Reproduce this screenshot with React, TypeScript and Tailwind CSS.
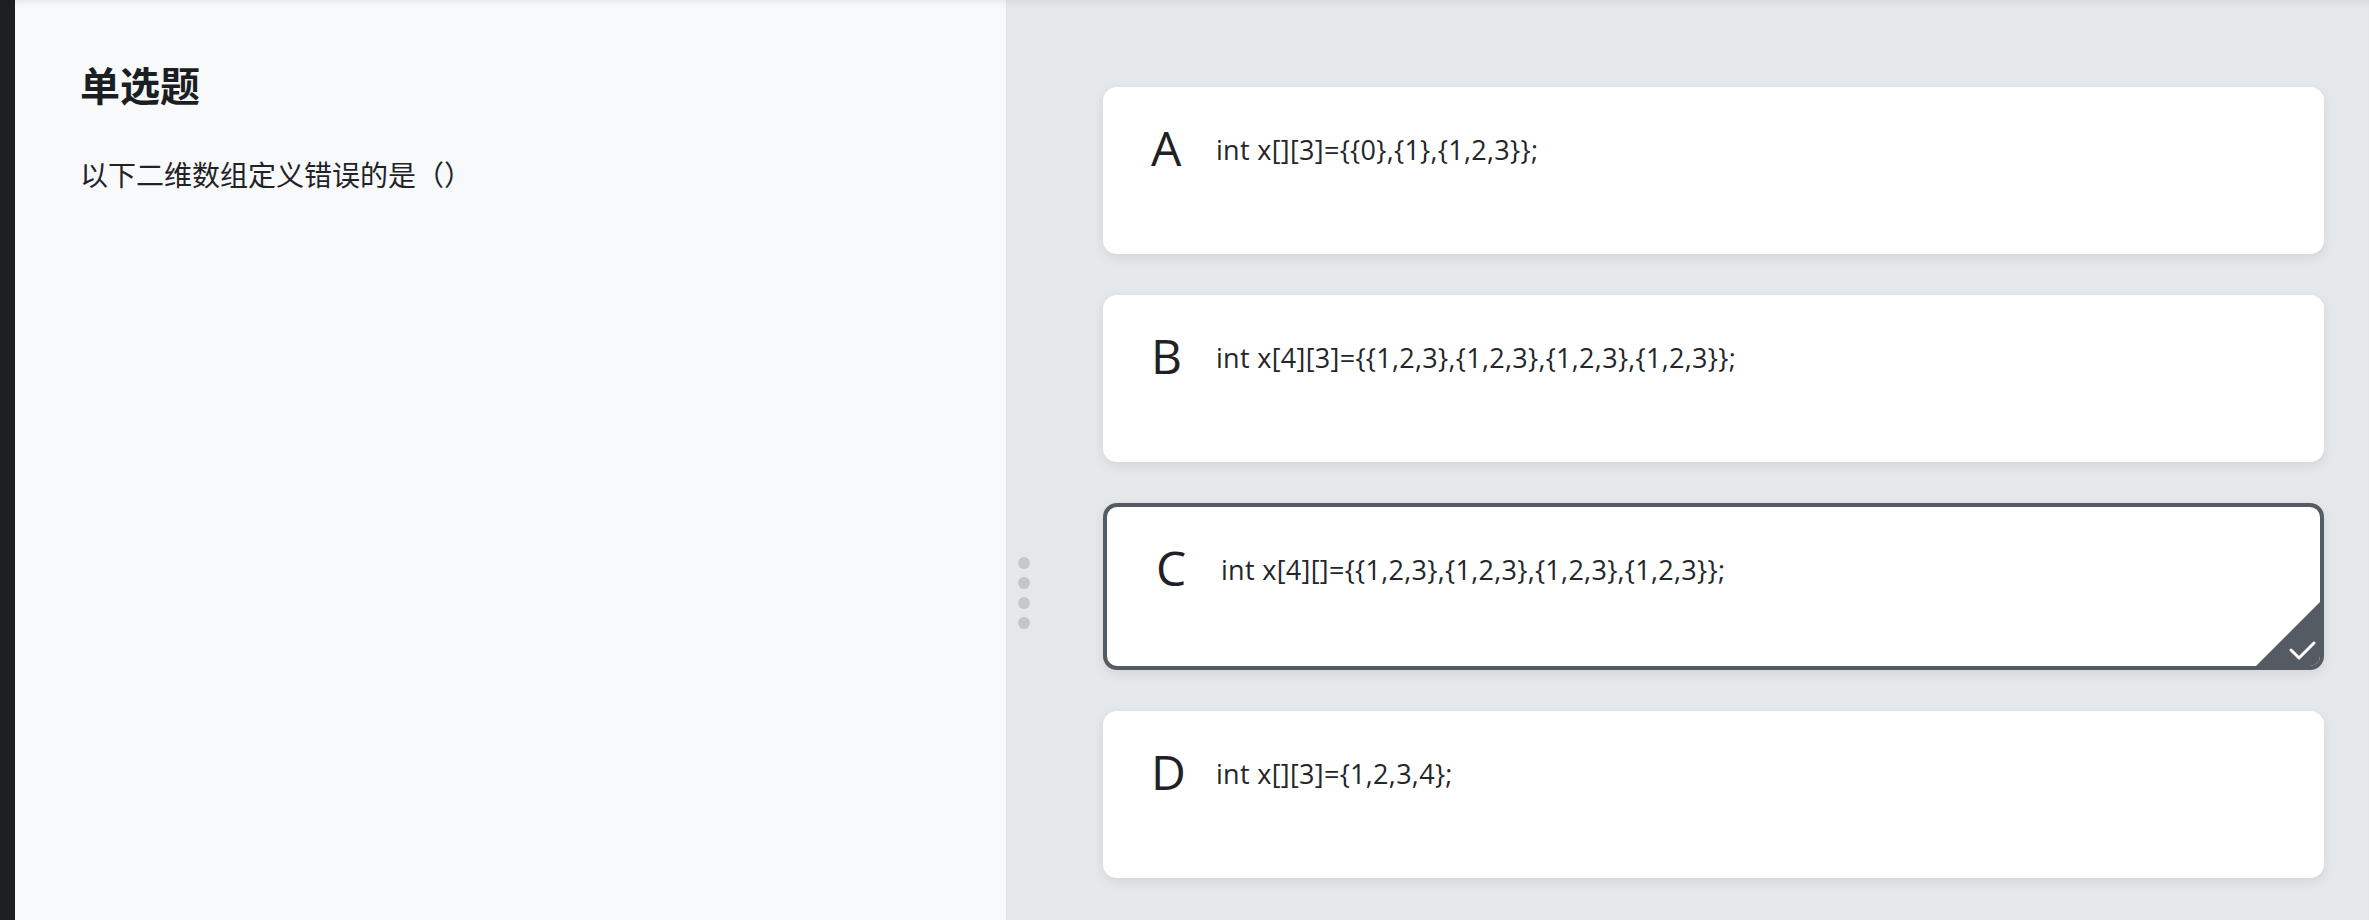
const options = [
  { key: "A", text: "int x[][3]={{0},{1},{1,2,3}};" },
  { key: "B", text: "int x[4][3]={{1,2,3},{1,2,3},{1,2,3},{1,2,3}};" },
  { key: "C", text: "int x[4][]={{1,2,3},{1,2,3},{1,2,3},{1,2,3}};" },
  { key: "D", text: "int x[][3]={1,2,3,4};" },
];

const selected = "C";

const OptionCard = ({ k, text, active }: { k: string; text: string; active: boolean }) => {
  return (
    <div
      className={
        active
          ? "relative box-border h-[167px] overflow-hidden rounded-[14px] border-4 border-[#545b63] bg-white pl-[49px] pt-[37px] shadow-[0_4px_12px_rgba(0,0,0,0.08)]"
          : "relative box-border h-[167px] overflow-hidden rounded-[14px] bg-white pl-[48px] pt-[37px] shadow-[0_4px_12px_rgba(0,0,0,0.08)]"
      }
    >
      <div className="flex items-start">
        <span className="w-[65px] shrink-0 text-[48px] leading-[48px] text-[#1e2125]">{k}</span>
        <span className="mt-[12px] text-[27px] leading-[27px] tracking-[0.3px] text-[#23272b]">{text}</span>
      </div>
      {active && (
        <svg className="absolute bottom-0 right-0" width="64" height="64" viewBox="0 0 64 64">
          <polygon points="64,0 64,64 0,64" fill="#545b63" />
          <path d="M35 48 L43 56 L58 41" fill="none" stroke="white" strokeWidth="3" strokeLinecap="round" strokeLinejoin="round" />
        </svg>
      )}
    </div>
  );
};

export default function App() {
  return (
    <div
      className="flex h-[920px] w-full overflow-hidden"
      style={{ fontFamily: '"Open Sans", "Noto Sans CJK SC", sans-serif' }}
    >
      <div className="w-[15px] shrink-0 bg-[#1b1f22]" />
      {/* question side */}
      <div className="w-[991px] shrink-0 bg-[#f8f9fb] pl-[65px] pt-[64px] shadow-[inset_0_7px_8px_-6px_rgba(0,0,0,0.10)]">
        <h2
          className="text-[40px] font-bold leading-[40px] text-[#1b1e22]"
          style={{ fontFamily: '"Noto Sans CJK SC", sans-serif' }}
        >
          单选题
        </h2>
        <p
          className="mt-[56px] text-[28px] leading-[28px] text-[#1f2327]"
          style={{ fontFamily: '"Noto Sans CJK SC", sans-serif' }}
        >
          以下二维数组定义错误的是（）
        </p>
      </div>
      {/* options side */}
      <div className="flex flex-1 bg-[#e5e8eb] shadow-[inset_0_7px_8px_-6px_rgba(0,0,0,0.10)]">
        <div className="w-[97px] shrink-0 pl-[12px] pt-[557px]">
          <div className="flex flex-col gap-[8px]">
            <div className="h-[12px] w-[12px] rounded-full bg-[#c4c7cb]" />
            <div className="h-[12px] w-[12px] rounded-full bg-[#c4c7cb]" />
            <div className="h-[12px] w-[12px] rounded-full bg-[#c4c7cb]" />
            <div className="h-[12px] w-[12px] rounded-full bg-[#c4c7cb]" />
          </div>
        </div>
        <div className="flex flex-1 flex-col gap-[41px] pr-[45px] pt-[87px]">
          {options.map((o) => (
            <OptionCard key={o.key} k={o.key} text={o.text} active={o.key === selected} />
          ))}
        </div>
      </div>
    </div>
  );
}
